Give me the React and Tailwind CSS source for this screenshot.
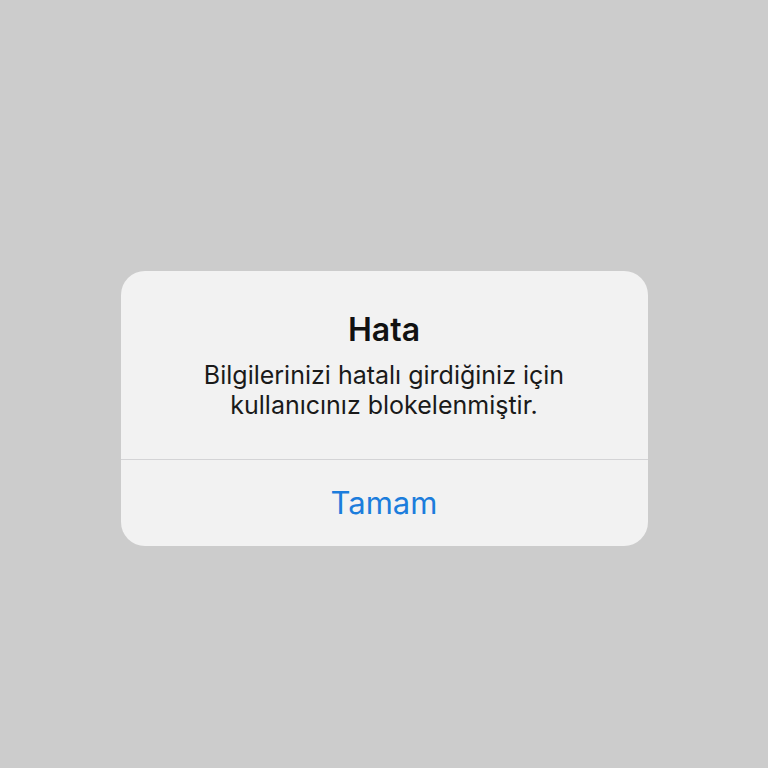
export default function App() {
  return (
    <div className="min-h-screen w-full bg-[#cccccc] flex justify-center pt-[271px]" style={{ fontFamily: "Inter, 'Noto Sans', sans-serif" }}>
      <div className="w-[527px] h-[275px] rounded-[24px] bg-[#f2f2f2] flex flex-col overflow-hidden">
        <div className="h-[188px] flex flex-col items-center pt-[41px] text-center">
          <h2 className="text-[32px] leading-[36px] font-semibold text-[#111]">Hata</h2>
          <p className="mt-[12px] text-[25px] leading-[30px] text-[#1a1a1a]">
            Bilgilerinizi hatalı girdiğiniz için
            <br />
            kullanıcınız blokelenmiştir.
          </p>
        </div>
        <div className="h-px bg-[#d4d4d6]" />
        <button className="flex-1 flex items-center justify-center text-[31px] text-[#1c7ddc]">
          Tamam
        </button>
      </div>
    </div>
  );
}
